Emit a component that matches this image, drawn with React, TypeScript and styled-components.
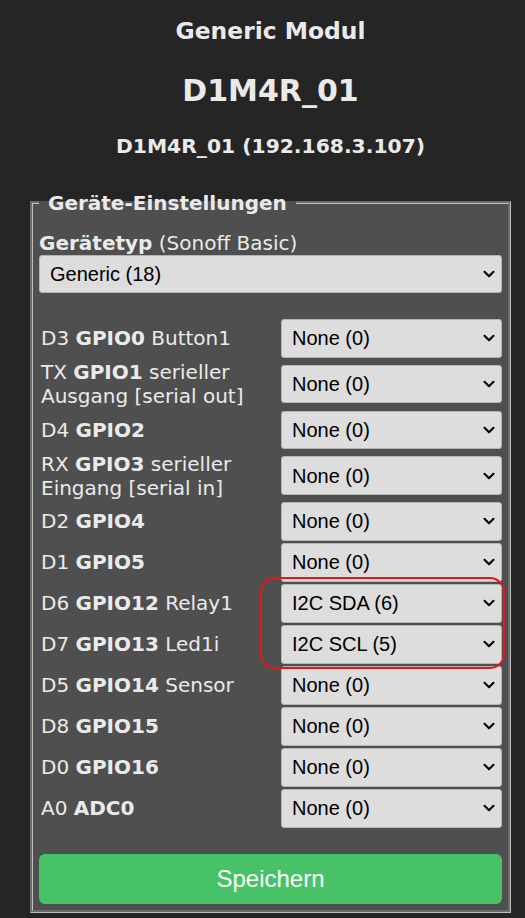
import React from 'react'
import styled, { createGlobalStyle } from 'styled-components'
import { ChevronDown } from 'lucide-react'

const GlobalStyle = createGlobalStyle`
  body {
    margin: 0;
    background: #252525;
    color: #eaeaea;
    font-family: 'DejaVu Sans', Verdana, sans-serif;
    font-size: 20px;
  }
`

const Page = styled.div`
  width: 481px;
  margin-left: 30px;
  padding-top: 18px;
  text-align: center;
`

const Title = styled.h3`
  margin: 0;
  font-size: 23.4px;
  line-height: 27px;
`

const DeviceName = styled.h2`
  margin: 27.5px 0 0;
  font-size: 30px;
  line-height: 35px;
`

const Host = styled.h4`
  margin: 27px 0 0;
  font-size: 20.3px;
  line-height: 23px;
`

const Box = styled.fieldset`
  box-sizing: border-box;
  width: 100%;
  margin: 33px 0 0;
  padding: 6px;
  border: 3px groove #c0c0c0;
  background: #4f4f4f;
  text-align: left;
`

const Legend = styled.legend`
  padding: 0 2px;
  font-weight: bold;
  line-height: 24px;
`

const TypeBlock = styled.div`
  margin-top: 10px;
  line-height: 24px;
`

const SelectWrap = styled.div`
  position: relative;
  height: 38.5px;
`

const Select = styled.select`
  box-sizing: border-box;
  width: 100%;
  height: 100%;
  margin: 0;
  padding: 0 28px 0 10px;
  border: 1px solid #b4b4b4;
  border-radius: 3px;
  background: #dddddd;
  color: #000;
  font-family: 'Liberation Sans', Arial, sans-serif;
  font-size: 20px;
  appearance: none;
  -webkit-appearance: none;
`

const Arrow = styled(ChevronDown)`
  position: absolute;
  right: 4px;
  top: 50%;
  transform: translateY(-50%);
  color: #000;
  pointer-events: none;
`

const PinGrid = styled.div`
  position: relative;
  display: grid;
  grid-template-columns: 1fr 221px;
  column-gap: 2px;
  row-gap: 2.5px;
  align-items: center;
  margin-top: 26px;
`

const PinLabel = styled.div`
  padding-left: 2px;
  line-height: 24px;
`

const Marker = styled.div`
  position: absolute;
  left: 221px;
  top: 258px;
  width: 245px;
  height: 92px;
  box-sizing: border-box;
  border: 2px solid #e3161c;
  border-radius: 15px;
  pointer-events: none;
`

const SaveButton = styled.button`
  display: block;
  width: 100%;
  height: 50px;
  margin-top: 26px;
  border: 0;
  border-radius: 6px;
  background: #47c266;
  color: #ffffff;
  font-family: 'Liberation Sans', Arial, sans-serif;
  font-size: 24px;
`

type Pin = { pre: string; gpio: string; post?: string; value?: string }

const pins: Pin[] = [
  { pre: 'D3', gpio: 'GPIO0', post: 'Button1' },
  { pre: 'TX', gpio: 'GPIO1', post: 'serieller Ausgang [serial out]' },
  { pre: 'D4', gpio: 'GPIO2' },
  { pre: 'RX', gpio: 'GPIO3', post: 'serieller Eingang [serial in]' },
  { pre: 'D2', gpio: 'GPIO4' },
  { pre: 'D1', gpio: 'GPIO5' },
  { pre: 'D6', gpio: 'GPIO12', post: 'Relay1', value: 'I2C SDA (6)' },
  { pre: 'D7', gpio: 'GPIO13', post: 'Led1i', value: 'I2C SCL (5)' },
  { pre: 'D5', gpio: 'GPIO14', post: 'Sensor' },
  { pre: 'D8', gpio: 'GPIO15' },
  { pre: 'D0', gpio: 'GPIO16' },
  { pre: 'A0', gpio: 'ADC0' },
]

const options = ['None (0)', 'I2C SCL (5)', 'I2C SDA (6)']

const Dropdown = ({ value, items }: { value: string; items: string[] }) => (
  <SelectWrap>
    <Select defaultValue={value}>
      {items.map((o) => (
        <option key={o}>{o}</option>
      ))}
    </Select>
    <Arrow size={18} strokeWidth={2.8} />
  </SelectWrap>
)

export default function App() {
  return (
    <>
      <GlobalStyle />
      <Page>
        <Title>Generic Modul</Title>
        <DeviceName>D1M4R_01</DeviceName>
        <Host>D1M4R_01 (192.168.3.107)</Host>
        <Box>
          <Legend>&nbsp;Geräte-Einstellungen&nbsp;</Legend>
          <TypeBlock>
            <b>Gerätetyp</b> (Sonoff Basic)
            <Dropdown value='Generic (18)' items={['Sonoff Basic (1)', 'Generic (18)']} />
          </TypeBlock>
          <PinGrid>
            {pins.map((p) => (
              <React.Fragment key={p.gpio}>
                <PinLabel>
                  {p.pre} <b>{p.gpio}</b>
                  {p.post ? ' ' + p.post : ''}
                </PinLabel>
                <Dropdown value={p.value || 'None (0)'} items={options} />
              </React.Fragment>
            ))}
            <Marker />
          </PinGrid>
          <SaveButton>Speichern</SaveButton>
        </Box>
      </Page>
    </>
  )
}
